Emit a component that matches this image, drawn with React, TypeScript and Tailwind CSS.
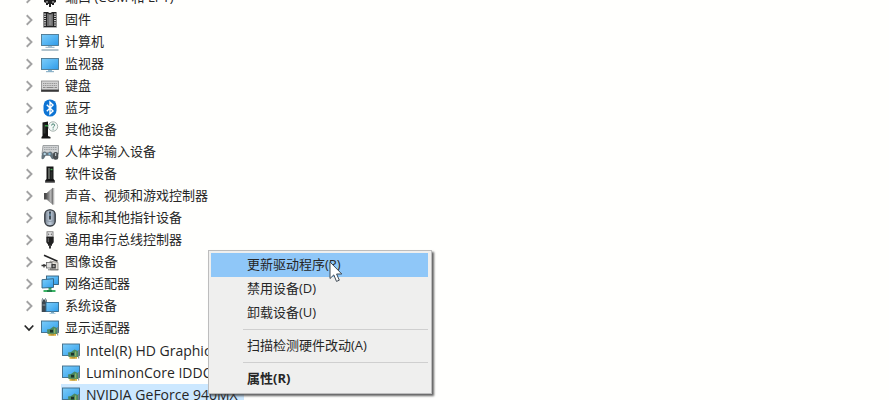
import type { ReactNode } from "react";
import clsx from "clsx";

type IconProps = { children: ReactNode };

function Icon({ children }: IconProps) {
  return (
    <svg viewBox="0 0 18 18" className="h-[18px] w-[18px] shrink-0" aria-hidden="true">
      {children}
    </svg>
  );
}

function Gradients() {
  return (
    <svg className="absolute h-0 w-0" aria-hidden="true">
      <defs>
        <linearGradient id="screen" x1="0" y1="0" x2="1" y2="1">
          <stop offset="0" stopColor="#7cccf8" />
          <stop offset="0.5" stopColor="#56b6f3" />
          <stop offset="1" stopColor="#2e9ae8" />
        </linearGradient>
        <linearGradient id="metal" x1="0" y1="0" x2="1" y2="0">
          <stop offset="0" stopColor="#5c5c5c" />
          <stop offset="0.6" stopColor="#b5b5b5" />
          <stop offset="1" stopColor="#6e6e6e" />
        </linearGradient>
        <linearGradient id="mouse" x1="0" y1="0" x2="1" y2="0">
          <stop offset="0" stopColor="#76808c" />
          <stop offset="0.5" stopColor="#c3d0de" />
          <stop offset="1" stopColor="#76808c" />
        </linearGradient>
      </defs>
    </svg>
  );
}

function PortIcon() {
  return (
    <Icon>
      <rect x="4" y="3" width="10" height="9" rx="1" fill="#3c3c3c" />
      <path d="M3 11h12v2l-2 1v2h-2v-1h-1v3H8v-3H7v1H5v-2l-2-1z" fill="#1f1f1f" />
      <path d="M6 12v2M12 12v2" stroke="#d0d0d0" strokeWidth="1" />
    </Icon>
  );
}

function FirmwareIcon() {
  return (
    <Icon>
      <path d="M2.500 1H7q2 2 4 0h4.500v15.500h-13z" fill="#222" />
      <path d="M6 2.500h1q2 1.500 4 0h1V15H6z" fill="#6d6d6d" />
      <path d="M8 4h2.500v10H8z" fill="#888" />
      <path d="M4 2.500v13M14 2.500v13" stroke="#ededed" strokeWidth="1.600" strokeDasharray="1.200 1" />
      <path d="M2.500 16.500h13" stroke="#b3b3b3" strokeWidth="1" />
    </Icon>
  );
}

function ComputerIcon() {
  return (
    <Icon>
      <rect x="0.500" y="1.500" width="17" height="11" fill="url(#screen)" stroke="#4a7790" strokeWidth="0.900" />
      <path d="M7 13h4v1H7z" fill="#a9c8d8" />
      <path d="M4.500 14.300h9" stroke="#90b0c2" strokeWidth="1" />
      <path d="M0.500 17h17" stroke="#7f9dad" strokeWidth="1.200" />
    </Icon>
  );
}

function MonitorIcon() {
  return (
    <Icon>
      <rect x="0.500" y="3.500" width="17" height="11" fill="url(#screen)" stroke="#4a7790" strokeWidth="0.900" />
      <path d="M7 15h4v1.500H7z" fill="#8fb8cf" />
      <path d="M5 16.700h8" stroke="#7ba6bf" strokeWidth="1" />
    </Icon>
  );
}

function KeyboardIcon() {
  return (
    <Icon>
      <rect x="0.500" y="4" width="17" height="10.500" fill="#d3d3d3" stroke="#8b8b8b" strokeWidth="0.800" />
      <path d="M2 6.500h14M2 8.500h14" stroke="#8f8f8f" strokeWidth="0.900" strokeDasharray="1.200 0.600" />
      <path d="M2 10.500h2.500M5.500 10.500h7M13.500 10.500H16" stroke="#808080" strokeWidth="0.900" />
      <path d="M0.200 13.600h17.600" stroke="#383838" strokeWidth="2" />
    </Icon>
  );
}

function BluetoothIcon() {
  return (
    <Icon>
      <rect x="2.500" y="0.500" width="13" height="17" rx="6.300" fill="#0c74d4" />
      <path d="M5.800 5.800l6.200 6.200-3 2.800V3.200l3 2.800-6.200 6.200" fill="none" stroke="#fff" strokeWidth="1.400" />
    </Icon>
  );
}

function OtherDeviceIcon() {
  return (
    <Icon>
      <path d="M1.500 1.500L7 0.500V15l2.500 1v1.500h-9V16l1-1z" fill="#161616" />
      <path d="M2.500 3.500h2v9h-2z" fill="#2e332e" />
      <path d="M4 4.800h3" stroke="#36b04a" strokeWidth="1.300" />
      <circle cx="12" cy="5.500" r="4.700" fill="#f3f8f6" stroke="#9caaa5" strokeWidth="0.900" />
      <path d="M10.600 4.500q0-1.600 1.500-1.600t1.400 1.400q0 .8-.8 1.300-.6.400-.6 1.200M12.100 7.600v1" fill="none" stroke="#43806f" strokeWidth="1" />
    </Icon>
  );
}

function HidIcon() {
  return (
    <Icon>
      <path d="M2 2.500h15.500V11H1z" fill="#d0d2d3" stroke="#8b8f91" strokeWidth="0.800" />
      <path d="M3 4.500h13M3 6.500h13" stroke="#9b9fa1" strokeWidth="0.900" strokeDasharray="1.500 0.700" />
      <path d="M0.500 15.500q-.3-5 2-6.800 1.800-.7 3 .8h2q1.500-1.500 3-.6 2 1.600 2 6.400-.8 1.600-2 .2l-1.700-2.800H4.600L3 15.500q-1.600 1.500-2.500 0z" fill="#65747d" />
      <circle cx="3.700" cy="10.900" r="1.200" fill="#b4d3e2" />
      <circle cx="8.500" cy="10.900" r="1.200" fill="#86b9d4" />
      <rect x="12" y="9" width="5.300" height="7.800" rx="2.500" fill="#4a4f53" />
      <path d="M14.700 10v3" stroke="#d6dde0" strokeWidth="1" />
    </Icon>
  );
}

function SoftwareIcon() {
  return (
    <Icon>
      <path d="M5.500 1.500h7V14l1.300 1.500v2H4.200v-2L5.500 14z" fill="#151515" />
      <path d="M7 3h2v11H7z" fill="#5c615c" />
      <path d="M9.500 4.500h2" stroke="#4faf5d" strokeWidth="1.500" />
      <path d="M9.500 6.500h2V14h-2z" fill="#2b2f2b" />
      <path d="M4.200 17h9.600" stroke="#606060" strokeWidth="1" />
    </Icon>
  );
}

function SoundIcon() {
  return (
    <Icon>
      <path d="M3 6h3v6.500H3z" fill="#4b4b4b" />
      <path d="M6 6l6-5v16.500l-6-5z" fill="url(#metal)" stroke="#858585" strokeWidth="0.600" />
      <path d="M12.700 1v16.500" stroke="#c1c1c1" strokeWidth="1.300" />
      <path d="M11.700 1v16.500" stroke="#757575" strokeWidth="0.600" />
    </Icon>
  );
}

function MouseIcon() {
  return (
    <Icon>
      <rect x="3.800" y="0.800" width="10.400" height="16.200" rx="4.700" fill="url(#mouse)" stroke="#30363c" strokeWidth="1.300" />
      <path d="M9 2.500v8" stroke="#2a333b" strokeWidth="1.700" />
      <path d="M9 4.500v2.500" stroke="#81c0ea" strokeWidth="0.900" />
      <path d="M5 11.500q4 2.500 8 0" fill="none" stroke="#808e9c" strokeWidth="0.700" />
    </Icon>
  );
}

function UsbIcon() {
  return (
    <Icon>
      <rect x="6" y="0.800" width="6" height="5.200" fill="#ececec" stroke="#747474" strokeWidth="0.900" />
      <path d="M7.700 2.500v1.700M10.300 2.500v1.700" stroke="#5e5e5e" strokeWidth="1" />
      <path d="M5.300 5.700h7.400v5.500L11 13.500v1.300H7v-1.300l-1.700-2.300z" fill="#202020" />
      <path d="M7.300 7v4" stroke="#686868" strokeWidth="1" />
      <path d="M9 14.500v3" stroke="#202020" strokeWidth="1.800" />
    </Icon>
  );
}

function ImagingIcon() {
  return (
    <Icon>
      <path d="M3 2.200l13.500 6" stroke="#242424" strokeWidth="1.500" />
      <path d="M9 8l8 1.500v7.300H9.500z" fill="#e0ddd6" stroke="#77746f" strokeWidth="0.700" />
      <rect x="5.500" y="9.500" width="5.500" height="5.500" fill="#dfdfdd" stroke="#636363" strokeWidth="0.800" />
      <path d="M0.500 12.500h4.500M3 11v3.500" stroke="#333" strokeWidth="1.300" />
      <rect x="10.500" y="11" width="4.300" height="4.500" fill="#3b3b3b" />
      <circle cx="12.700" cy="13.200" r="1.100" fill="#a0a0a0" />
      <path d="M7 16.800h10.500" stroke="#595959" strokeWidth="0.800" />
    </Icon>
  );
}

function NetworkIcon() {
  return (
    <Icon>
      <rect x="5.500" y="1" width="12" height="8.500" fill="url(#screen)" stroke="#315f7d" strokeWidth="0.900" />
      <path d="M1 4.700l11.500-1v8.700L1 13z" fill="url(#screen)" stroke="#315f7d" strokeWidth="0.900" />
      <path d="M7.500 12.800h3v2h-3z" fill="#2a995a" />
      <path d="M2.500 16h12" stroke="#3bb264" strokeWidth="2" />
      <path d="M6 16h5" stroke="#217e49" strokeWidth="2" />
    </Icon>
  );
}

function SystemIcon() {
  return (
    <Icon>
      <path d="M0.700 2.500h5v12.500h-5z" fill="#3e4850" />
      <path d="M1.500 1v3.500M4.500 1v3.500M1.500 8h3" stroke="#93a1aa" strokeWidth="1" />
      <rect x="5" y="5.500" width="12.500" height="9" fill="url(#screen)" stroke="#336b8e" strokeWidth="0.900" />
      <path d="M10 14.800h3v1.300h-3z" fill="#79aac5" />
      <path d="M8.500 16.400h6" stroke="#98bed2" strokeWidth="0.900" />
    </Icon>
  );
}

function DisplayIcon() {
  return (
    <Icon>
      <rect x="0.500" y="2" width="17" height="11.500" fill="url(#screen)" stroke="#3e6b87" strokeWidth="0.900" />
      <path d="M6 10.500l3-.5 3.500-2.500 3.500 1.500v6H6.500z" fill="#4b8a63" />
      <path d="M9 10.800h3v2.700H9z" fill="#1e3328" />
      <path d="M13.700 9.500v4.500" stroke="#a3bb63" strokeWidth="1" />
      <path d="M7.500 14.800h7.500v2h-7.500z" fill="#ddb13c" />
      <path d="M9.500 15.800h3.500" stroke="#8f7a35" strokeWidth="0.800" />
      <path d="M16.700 8v8.500" stroke="#7d8078" strokeWidth="1" />
    </Icon>
  );
}

const categories = [
  { label: "端口 (COM 和 LPT)", icon: PortIcon },
  { label: "固件", icon: FirmwareIcon },
  { label: "计算机", icon: ComputerIcon },
  { label: "监视器", icon: MonitorIcon },
  { label: "键盘", icon: KeyboardIcon },
  { label: "蓝牙", icon: BluetoothIcon },
  { label: "其他设备", icon: OtherDeviceIcon },
  { label: "人体学输入设备", icon: HidIcon },
  { label: "软件设备", icon: SoftwareIcon },
  { label: "声音、视频和游戏控制器", icon: SoundIcon },
  { label: "鼠标和其他指针设备", icon: MouseIcon },
  { label: "通用串行总线控制器", icon: UsbIcon },
  { label: "图像设备", icon: ImagingIcon },
  { label: "网络适配器", icon: NetworkIcon },
  { label: "系统设备", icon: SystemIcon },
  {
    label: "显示适配器",
    icon: DisplayIcon,
    devices: ["Intel(R) HD Graphics", "LuminonCore IDDCX", "NVIDIA GeForce 940MX"],
  },
];

const selectedDevice = "NVIDIA GeForce 940MX";

function Chevron({ open }: { open: boolean }) {
  return (
    <svg viewBox="0 0 10 12" className="h-3 w-[10px]" aria-hidden="true">
      {open ? (
        <path d="M0.700 3.500L5 8l4.300-4.500" fill="none" stroke="#262626" strokeWidth="1.700" />
      ) : (
        <path d="M2.700 1.300L7.500 6l-4.800 4.700" fill="none" stroke="#a3a3a3" strokeWidth="1.900" />
      )}
    </svg>
  );
}

function DeviceTree() {
  return (
    <ul className="-mt-[13px]">
      {categories.map(({ label, icon: CategoryIcon, devices }) => (
        <li key={label}>
          <div className="flex h-[22px] items-center pl-6">
            <button type="button" aria-label={label} aria-expanded={!!devices} className="mr-[7px]">
              <Chevron open={!!devices} />
            </button>
            <CategoryIcon />
            <span className="ml-[6px] whitespace-nowrap">{label}</span>
          </div>
          {devices && (
            <ul className="pt-px pl-[61px]">
              {devices.map((device) => (
                <li
                  key={device}
                  className={clsx(
                    "flex h-[22px] w-fit items-center gap-[6px] pr-1.5 pl-px whitespace-nowrap",
                    device === selectedDevice && "bg-[#cce8ff]",
                  )}
                >
                  <DisplayIcon />
                  <span className="text-sm">{device}</span>
                </li>
              ))}
            </ul>
          )}
        </li>
      ))}
    </ul>
  );
}

function MenuItem({ children, className }: { children: ReactNode; className?: string }) {
  return (
    <button
      type="button"
      role="menuitem"
      className={clsx("flex h-6 w-full items-center pl-9 text-left whitespace-nowrap", className)}
    >
      {children}
    </button>
  );
}

function Separator() {
  return <div role="separator" className="my-1 ml-8 h-px bg-[#cfcfcf]" />;
}

function ContextMenu() {
  return (
    <div
      role="menu"
      className="absolute top-[250px] left-52 w-56 border border-[#bdbdbd] bg-[#efefee] py-[2px] pr-[3px] pl-[2px] shadow-[2px_2px_2px_rgba(60,60,60,0.8)]"
    >
      <MenuItem className="bg-[#8fc7f8]">更新驱动程序(P)</MenuItem>
      <MenuItem>禁用设备(D)</MenuItem>
      <MenuItem>卸载设备(U)</MenuItem>
      <Separator />
      <MenuItem>扫描检测硬件改动(A)</MenuItem>
      <Separator />
      <MenuItem className="font-bold">属性(R)</MenuItem>
    </div>
  );
}

function Pointer() {
  return (
    <svg viewBox="0 0 14 22" className="absolute top-[261px] left-[329px] h-[22px] w-[14px]" aria-hidden="true">
      <path
        d="M1 1v16.500l3.800-3.600 2.700 6.500 2.800-1.200-2.700-6.200h5.200z"
        fill="#fff"
        stroke="#3f4a55"
        strokeWidth="1"
      />
    </svg>
  );
}

export default function App() {
  return (
    <main
      lang="zh-CN"
      className="relative h-screen overflow-hidden bg-[#fffffd] font-['Open_Sans','Noto_Sans_CJK_SC',sans-serif] text-[13px] text-[#262626]"
    >
      <Gradients />
      <DeviceTree />
      <ContextMenu />
      <Pointer />
    </main>
  );
}
